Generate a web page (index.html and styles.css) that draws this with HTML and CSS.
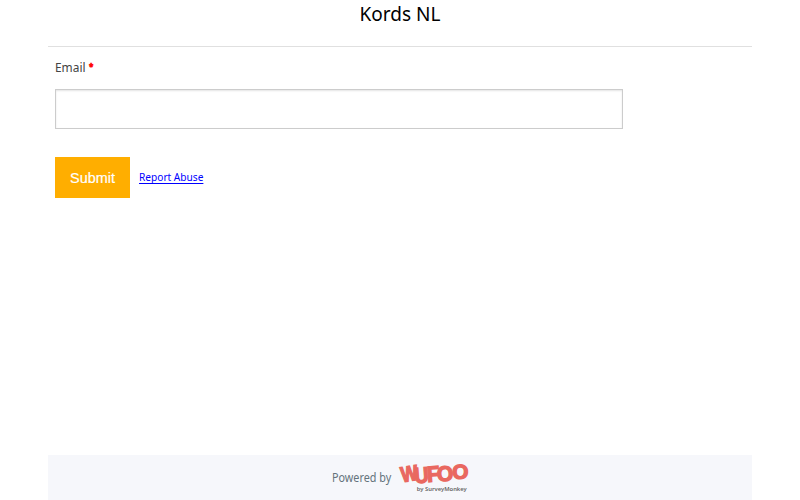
FILE: index.html
```
<!DOCTYPE html>
<html lang="en">
<head>
<meta charset="utf-8">
<title>Kords NL</title>
<link rel="stylesheet" href="styles.css">
</head>
<body>
<main class="page">
  <header class="header"><h1 class="title">Kords NL</h1></header>
  <form class="form">
    <label class="label" for="email"><span class="label-text">Email</span><span class="required">*</span></label>
    <input class="field" id="email" type="email">
    <div class="actions">
      <button class="submit" type="button">Submit</button>
      <a class="report" href="#">Report Abuse</a>
    </div>
  </form>
  <footer class="footer">
    <span class="powered">Powered by</span>
    <svg class="logo" width="76" height="38" viewBox="0 -4 76 38">
      <g class="brand">
        <text transform="translate(6 20.2) rotate(-9)" font-size="21.5" textLength="17" lengthAdjust="spacingAndGlyphs">W</text>
        <text transform="translate(19 21.2) rotate(-4)" font-size="22" textLength="14" lengthAdjust="spacingAndGlyphs">U</text>
        <text transform="translate(31.6 20) rotate(-4)" font-size="22" textLength="12.5" lengthAdjust="spacingAndGlyphs">F</text>
        <text transform="translate(41.6 19.6) rotate(-4)" font-size="21" textLength="16.2" lengthAdjust="spacingAndGlyphs">O</text>
        <text transform="translate(56 16.2) rotate(3)" font-size="20" textLength="16" lengthAdjust="spacingAndGlyphs">O</text>
      </g>
      <text class="byline" x="20.8" y="28.8" textLength="50" lengthAdjust="spacingAndGlyphs">by SurveyMonkey</text>
    </svg>
  </footer>
</main>
</body>
</html>
```
FILE: styles.css
```
* { box-sizing: border-box; }
body { margin: 0; background: #fff; font-family: "Noto Sans", sans-serif; }
.page { width: 704px; height: 500px; margin: 0 auto; display: flex; flex-direction: column; }
.header { height: 47px; border-bottom: 1px solid #e0e0e0; text-align: center; }
.title { margin: 0; font-size: 20px; line-height: 28px; font-weight: 400; color: #000; transform: scaleX(.95); }
.form { flex: 1; padding: 11px 7px 0; }
.label { display: flex; height: 20px; font-size: 12px; line-height: 20px; color: #444; }
.label-text { width: 34px; transform: scaleX(.99); transform-origin: left; }
.required { color: #f00; font-weight: 700; font-size: 8px; line-height: 18px; -webkit-text-stroke: .6px #f00; }
.field { display: block; width: 568px; height: 40px; margin-top: 11px; border: 1px solid #ccc; box-shadow: inset 0 1px 2px #e4e4e4; background: #fff; }
.actions { display: flex; align-items: center; gap: 9px; margin-top: 28px; }
.submit { width: 75px; height: 41px; border: 0; padding: 0; background: #ffae00; color: #fff; font: 14.4px "Liberation Sans", sans-serif; -webkit-text-stroke: .2px #fff; }
.report { color: #00f; font-size: 10.5px; line-height: 15px; text-decoration: underline 1px #00f; text-underline-offset: 1.5px; text-decoration-skip-ink: none; transform: scaleX(.965); transform-origin: left; }
.footer { display: flex; height: 45px; padding: 5px 0 0 283.5px; background: #f6f7fb; }
.powered { width: 64px; font-size: 12px; line-height: 36px; color: #64737c; transform: scaleX(.9); transform-origin: left; white-space: nowrap; }
.logo { display: block; overflow: visible; margin-top: -2px; }
.brand { fill: #e96860; stroke: #e96860; stroke-width: 1.4; font-family: "Liberation Sans", sans-serif; font-weight: 700; }
.byline { fill: #666; font-size: 6px; font-weight: 600; }
```
